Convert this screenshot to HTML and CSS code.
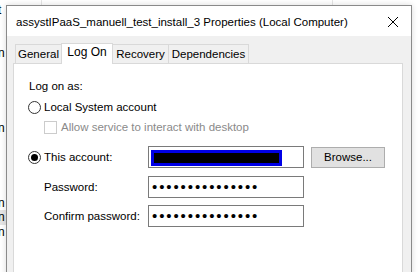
FILE: index.html
```html
<!DOCTYPE html>
<html lang="en">
<head>
	<meta charset="UTF-8">
	<title>Properties</title>
	<link rel="stylesheet" href="styles.css">
</head>
<body>

	<div class="desk">
		<span class="colLine colA"></span>
		<span class="colLine colB"></span>
		<span class="frag" style="top:3px">t</span>
		<span class="frag" style="top:46px">n</span>
		<span class="frag" style="top:121px">n</span>
		<span class="frag" style="top:196px">n</span>
		<span class="frag hl" style="top:210px">n</span>
		<span class="frag" style="top:225px">n</span>
	</div>

	<div class="dialog">
		<div class="titlebar">
			<span class="title">assystIPaaS_manuell_test_install_3 Properties (Local Computer)</span>
			<svg class="close" width="12" height="12" viewBox="0 0 12 12">
				<path d="M1 1 L11 11 M11 1 L1 11" stroke="#000" stroke-width="1" fill="none"/>
			</svg>
		</div>

		<div class="client">
			<div class="tabs">
				<span class="tab t1">General</span>
				<span class="tab t2 active">Log On</span>
				<span class="tab t3">Recovery</span>
				<span class="tab t4">Dependencies</span>
			</div>

			<div class="panel">
				<div class="row first">Log on as:</div>

				<div class="row radioRow">
					<span class="radio"></span>
					<span>Local System account</span>
				</div>

				<div class="row checkRow">
					<span class="check"></span>
					<span class="disabled">Allow service to interact with desktop</span>
				</div>

				<div class="formRow r4">
					<div class="lbl withRadio">
						<span class="radio on"></span>
						<span>This account:</span>
					</div>
					<div class="box"><span class="redact"></span></div>
					<div class="btn">Browse...</div>
				</div>

				<div class="formRow r5">
					<div class="lbl">Password:</div>
					<div class="box"><span class="dots">•••••••••••••••</span></div>
				</div>

				<div class="formRow r6">
					<div class="lbl">Confirm password:</div>
					<div class="box"><span class="dots">•••••••••••••••</span></div>
				</div>
			</div>
		</div>
	</div>

</body>
</html>
```

FILE: styles.css
```css
*{
	margin: 0;
	padding: 0;
	box-sizing: border-box;
}
body{
	width: 419px;
	height: 272px;
	overflow: hidden;
	background: #fff;
	font-family: "Liberation Sans", Arial, sans-serif;
	font-size: 11.5px;
	color: #000;
	position: relative;
}
/* window behind */
.desk{
	position: absolute;
	left: 0;
	top: 0;
	width: 419px;
	height: 272px;
}
.colLine{
	position: absolute;
	top: 0;
	width: 1px;
	height: 6px;
	background: #e5e5e5;
}
.colA{ left: 41px; }
.colB{ left: 332px; }
.frag{
	position: absolute;
	left: -2px;
	width: 8px;
	height: 15px;
	line-height: 15px;
	font-size: 12px;
	overflow: hidden;
}
.frag.hl{
	background: #e5e5e5;
}

/* dialog */
.dialog{
	position: absolute;
	left: 6px;
	top: 5px;
	width: 406px;
	height: 280px;
	border: 1px solid #8a8a8a;
	background: #f0f0f0;
	box-shadow: 0 0 6px rgba(0,0,0,0.15);
}
.titlebar{
	height: 30px;
	background: #fff;
	display: flex;
	align-items: center;
	padding-left: 9px;
	padding-right: 12px;
}
.title{
	flex: 1;
	font-size: 11.5px;
	white-space: nowrap;
	padding-top: 2px;
}
.close{
	display: block;
	margin-top: 1px;
}
.client{
	padding: 7px 0 0 6px;
}
.tabs{
	display: flex;
	align-items: flex-end;
	height: 21px;
	padding-left: 2px;
	margin-bottom: -1px;
	position: relative;
	z-index: 1;
}
.tab{
	height: 19px;
	border: 1px solid #d9d9d9;
	border-bottom: none;
	background: #f0f0f0;
	text-align: center;
	line-height: 18px;
	margin-bottom: 1px;
	white-space: nowrap;
}
.tab + .tab{
	margin-left: -1px;
}
.t1{ width: 47px; }
.t2{ width: 52px; }
.t3{ width: 57px; }
.t4{ width: 81px; }
.tab.active{
	height: 21px;
	background: #fff;
	margin-bottom: 0;
	line-height: 17px;
	font-size: 12px;
	position: relative;
	z-index: 2;
}
.panel{
	width: 390px;
	height: 220px;
	background: #fff;
	border: 1px solid #d9d9d9;
	padding: 12px 0 0 14px;
}
.row{
	height: 20px;
	display: flex;
	align-items: center;
}
.row.first{
	padding-left: 1px;
	padding-bottom: 1px;
}
.radioRow{
	margin-top: 1px;
}
.checkRow{
	padding-left: 16px;
}
.radio{
	width: 13px;
	height: 13px;
	border: 1px solid #333;
	border-radius: 50%;
	margin-right: 3px;
	position: relative;
	flex: none;
}
.radio.on::after{
	content: "";
	position: absolute;
	left: 2px;
	top: 2px;
	width: 7px;
	height: 7px;
	border-radius: 50%;
	background: #000;
}
.check{
	width: 13px;
	height: 13px;
	border: 1px solid #cccccc;
	margin-right: 4px;
	flex: none;
}
.disabled{
	color: #8a8a8a;
}
.formRow{
	display: flex;
	align-items: center;
	height: 22px;
}
.r4{ margin-top: 9px; }
.r5{ margin-top: 8px; }
.r6{ margin-top: 7px; }
.lbl{
	width: 120px;
	padding-left: 16px;
	display: flex;
	align-items: center;
	white-space: nowrap;
}
.lbl.withRadio{
	padding-left: 0;
}
.box{
	width: 156px;
	height: 22px;
	border: 1px solid #7a7a7a;
	padding: 3px 0 0 2px;
	overflow: hidden;
}
.redact{
	display: block;
	width: 131px;
	height: 16px;
	background: #000;
	border: 3px solid #0000e6;
}
.dots{
	display: block;
	font-size: 15px;
	line-height: 14px;
	letter-spacing: 1.9px;
	padding-left: 1px;
}
.btn{
	width: 74px;
	height: 21px;
	margin-left: 7px;
	background: #e1e1e1;
	border: 1px solid #adadad;
	text-align: center;
	line-height: 19px;
}
```
